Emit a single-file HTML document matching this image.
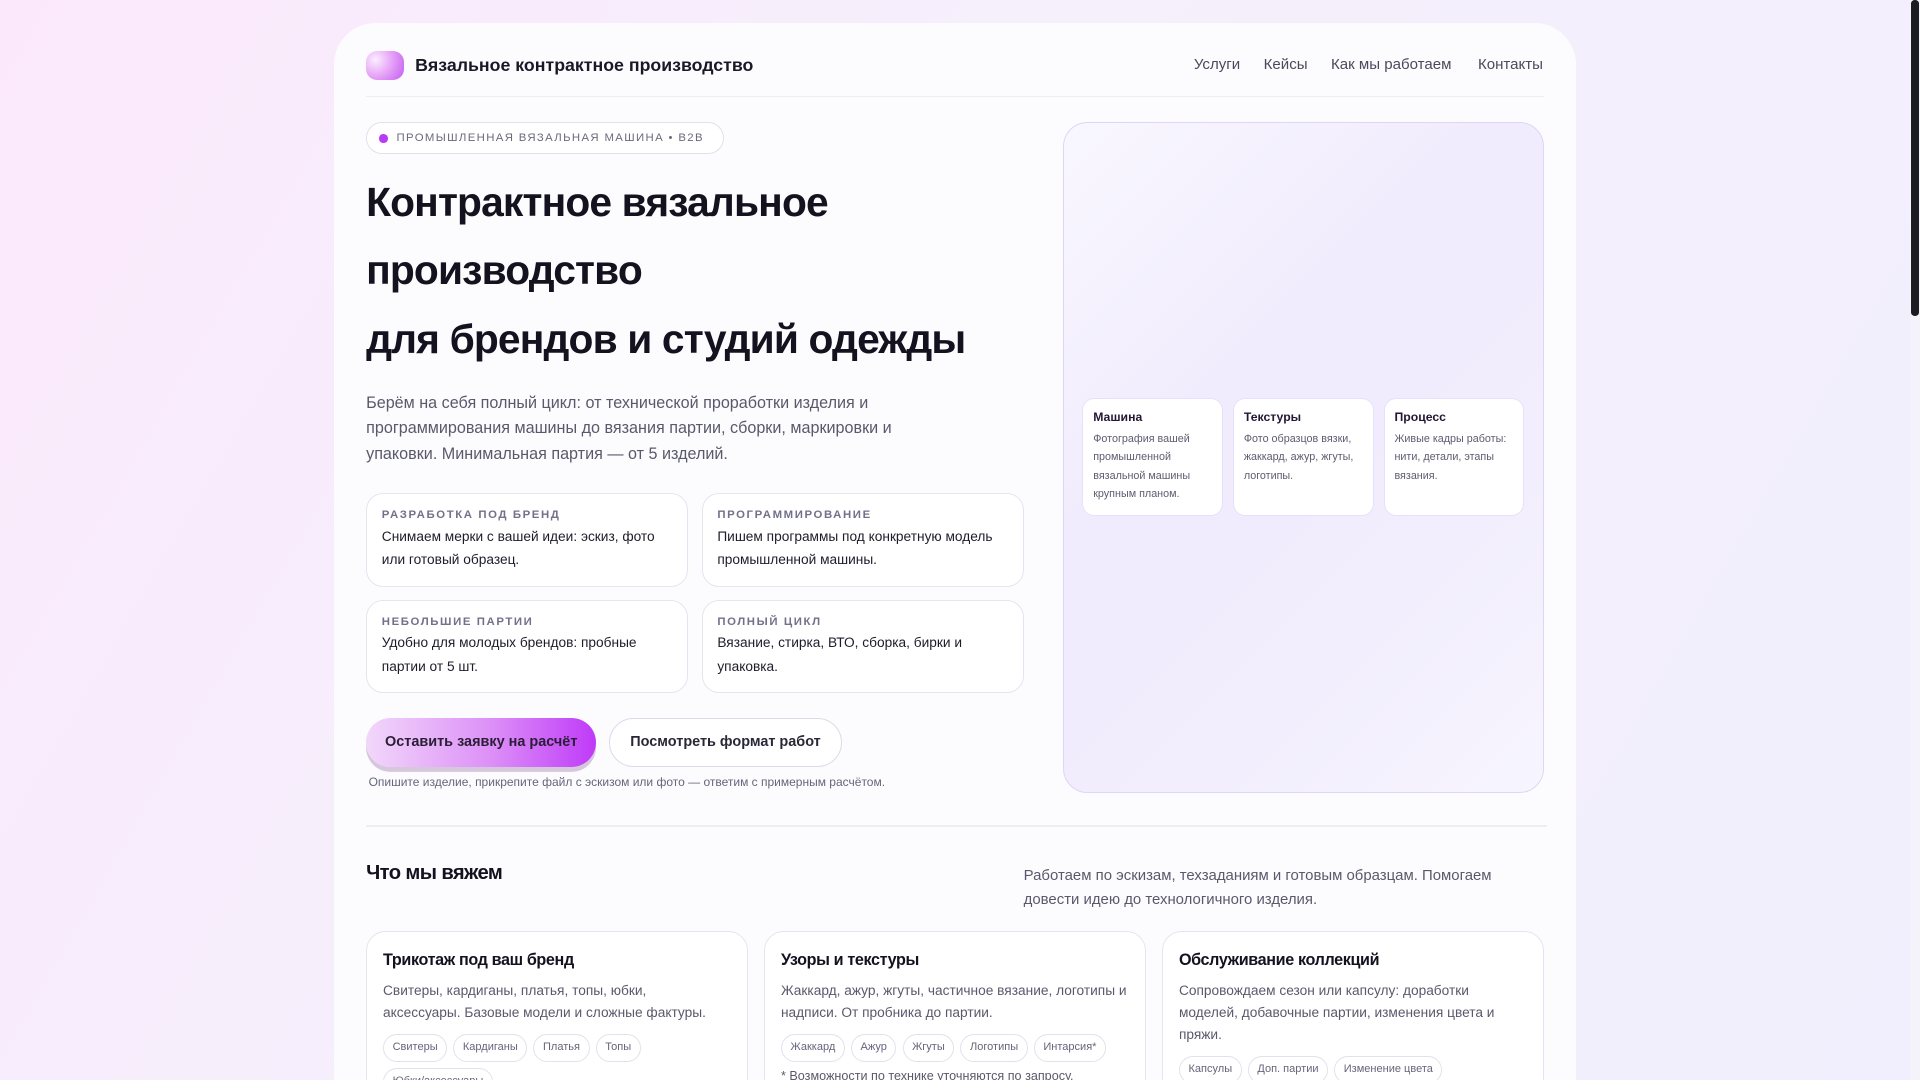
<!DOCTYPE html>
<html><head><meta charset="utf-8">
<style>
html{zoom:1.22449}
*{box-sizing:border-box;margin:0;padding:0}
html,body{overflow:hidden}
body{width:1568px;height:882px;font-family:"Liberation Sans","Noto Sans CJK SC",sans-serif;color:#14121f;background:linear-gradient(120deg,#fbe9fb 0%,#f6effc 40%,#f1effd 100%)}
#root{position:relative;width:1568px;height:882px;overflow:hidden}
.sb{position:absolute;left:1560px;top:0;width:8px;height:882px;background:#f4f2fb}
.sb i{position:absolute;left:1px;top:0;width:6px;height:258px;background:#1c1b22;border-radius:3px}
.wrap{position:absolute;left:273px;top:19px;width:1014px;height:900px;background:#fcfcff;border-radius:34px 34px 0 0}
.a{position:absolute}
.logo{left:299px;top:42px;width:31px;height:23px;border-radius:9px;background:radial-gradient(circle at 25% 30%,#fbeefd 0%,#e7a6f7 45%,#c35af0 100%)}
.brand{left:339px;top:45px;font-size:14.5px;font-weight:bold;color:#1a1826}
.nav{top:46px;font-size:12.3px;color:#4a4a5c}
.hr{height:1px;background:#eeedf4}
.pill{left:299px;top:100px;height:26px;width:292px;border:1px solid #e2e0ee;border-radius:13px;background:#fff;font-size:9.3px;letter-spacing:1.1px;color:#6b6a7c;padding:7px 0 0 24px}
.pill:before{content:"";position:absolute;left:10px;top:9px;width:7px;height:7px;border-radius:50%;background:#b63cf5}
h1{position:absolute;left:299px;top:137px;font-size:33.3px;line-height:56px;font-weight:bold;letter-spacing:-0.7px;color:#14121f}
.lead{left:299px;top:319px;width:460px;font-size:13.2px;line-height:21px;color:#5a596b}
.fc{width:263px;height:76px;border:1px solid #e6e4f0;border-radius:14px;background:#fff;padding:12px 12px}
.fc b{display:block;font-size:9.3px;letter-spacing:1.3px;color:#72718a;margin-bottom:3px}
.fc p{font-size:11.2px;line-height:19px;color:#1e1c2a}
.b1{left:299px;top:586px;width:188px;height:40px;border-radius:20px;background:linear-gradient(90deg,#f2d7fa 0%,#dc8ff7 55%,#bf3af8 100%);box-shadow:0 4px 0 #d6c8dc;font-size:11.8px;font-weight:bold;color:#2a1d36;text-align:center;line-height:40px}
.b2{left:497px;top:586px;width:191px;height:40px;border-radius:20px;background:#fff;border:1px solid #dcdae8;font-size:11.8px;font-weight:bold;color:#2a2838;text-align:center;line-height:38px}
.note{left:301px;top:633px;font-size:9.8px;color:#66657a}
.hero{left:868px;top:100px;width:393px;height:548px;border:1px solid #ddd6f6;border-radius:20px;background:linear-gradient(135deg,#f9f7fe 0%,#f0ebfd 40%,#f2eefd 70%,#f7f5fe 100%)}
.mc{top:325px;width:115px;height:96px;background:#fff;border:1px solid #e6e0fa;border-radius:10px;padding:9px 8px}
.mc b{display:block;font-size:10px;color:#241634;margin-bottom:5px}
.mc p{font-size:8.8px;line-height:15px;color:#5e5c70}
h2{position:absolute;left:299px;top:704px;font-size:16.5px;font-weight:bold;color:#14121f;letter-spacing:-0.5px}
.sub{left:836px;top:706px;width:400px;font-size:12.2px;line-height:19.5px;color:#5a596b}
.cc{top:760px;width:312px;height:140px;border:1px solid #e6e4f0;border-radius:16px;background:#fff;padding:16px 13px}
.cc b{display:block;font-size:13.2px;color:#14121f;margin-bottom:8px;letter-spacing:-0.3px}
.cc p{font-size:11.2px;line-height:18px;color:#5a596b}
.tags{margin-top:8px;display:flex;flex-wrap:wrap;gap:5px}
.tags span{border:1px solid #e3e1ec;border-radius:12px;height:23px;padding:0 7px;font-size:9px;line-height:21px;color:#66657a}
.fn{font-size:10.3px;color:#5a596b;margin-top:6px}
</style></head><body><div id="root">
<div class="wrap"></div>
<div class="sb"><i></i></div>
<div class="a logo"></div>
<div class="a brand">Вязальное контрактное производство</div>
<div class="a nav" style="left:975px">Услуги</div>
<div class="a nav" style="left:1032px">Кейсы</div>
<div class="a nav" style="left:1087px">Как мы работаем</div>
<div class="a nav" style="left:1207px">Контакты</div>
<div class="a hr" style="left:299px;top:78px;width:962px"></div>
<div class="a pill">ПРОМЫШЛЕННАЯ ВЯЗАЛЬНАЯ МАШИНА • B2B</div>
<h1>Контрактное вязальное<br>производство<br>для брендов и студий одежды</h1>
<div class="a lead">Берём на себя полный цикл: от технической проработки изделия и программирования машины до вязания партии, сборки, маркировки и упаковки. Минимальная партия — от 5 изделий.</div>
<div class="a fc" style="left:299px;top:403px"><b>РАЗРАБОТКА ПОД БРЕНД</b><p>Снимаем мерки с вашей идеи: эскиз, фото или готовый образец.</p></div>
<div class="a fc" style="left:573px;top:403px"><b>ПРОГРАММИРОВАНИЕ</b><p>Пишем программы под конкретную модель промышленной машины.</p></div>
<div class="a fc" style="left:299px;top:490px"><b>НЕБОЛЬШИЕ ПАРТИИ</b><p>Удобно для молодых брендов: пробные партии от 5 шт.</p></div>
<div class="a fc" style="left:573px;top:490px"><b>ПОЛНЫЙ ЦИКЛ</b><p>Вязание, стирка, ВТО, сборка, бирки и упаковка.</p></div>
<div class="a b1">Оставить заявку на расчёт</div>
<div class="a b2">Посмотреть формат работ</div>
<div class="a note">Опишите изделие, прикрепите файл с эскизом или фото — ответим с примерным расчётом.</div>
<div class="a hero"></div>
<div class="a mc" style="left:884px"><b>Машина</b><p>Фотография вашей промышленной вязальной машины крупным планом.</p></div>
<div class="a mc" style="left:1007px"><b>Текстуры</b><p>Фото образцов вязки, жаккард, ажур, жгуты, логотипы.</p></div>
<div class="a mc" style="left:1130px"><b>Процесс</b><p>Живые кадры работы: нити, детали, этапы вязания.</p></div>
<div class="a hr" style="left:299px;top:674px;width:964px"></div>
<h2>Что мы вяжем</h2>
<div class="a sub">Работаем по эскизам, техзаданиям и готовым образцам. Помогаем довести идею до технологичного изделия.</div>
<div class="a cc" style="left:299px"><b>Трикотаж под ваш бренд</b><p>Свитеры, кардиганы, платья, топы, юбки,<br>аксессуары. Базовые модели и сложные фактуры.</p><div class="tags"><span>Свитеры</span><span>Кардиганы</span><span>Платья</span><span>Топы</span><span>Юбки/аксессуары</span></div></div>
<div class="a cc" style="left:624px"><b>Узоры и текстуры</b><p>Жаккард, ажур, жгуты, частичное вязание, логотипы и надписи. От пробника до партии.</p><div class="tags"><span>Жаккард</span><span>Ажур</span><span>Жгуты</span><span>Логотипы</span><span>Интарсия*</span></div><div class="fn">* Возможности по технике уточняются по запросу.</div></div>
<div class="a cc" style="left:949px"><b>Обслуживание коллекций</b><p>Сопровождаем сезон или капсулу: доработки моделей, добавочные партии, изменения цвета и пряжи.</p><div class="tags"><span>Капсулы</span><span>Доп. партии</span><span>Изменение цвета</span></div></div>
</div></body></html>
